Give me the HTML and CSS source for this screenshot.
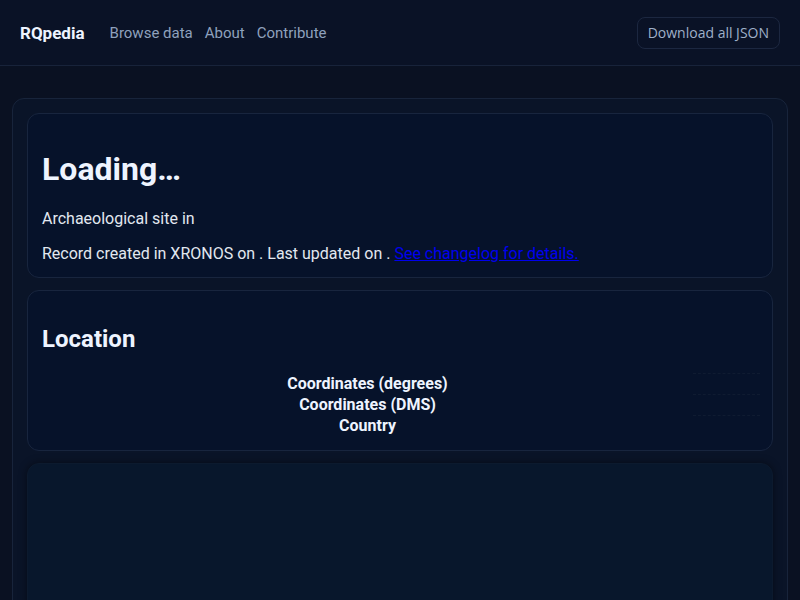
FILE: index.html
```html
<!DOCTYPE html>
<html lang="en">
<head>
<meta charset="utf-8">
<title>RQpedia</title>
<link rel="stylesheet" href="styles.css">
</head>
<body>
<header class="topbar">
  <div class="topbar-left">
    <a class="brand" href="#">RQpedia</a>
    <nav class="nav">
      <a href="#">Browse data</a>
      <a href="#">About</a>
      <a href="#">Contribute</a>
    </nav>
  </div>
  <a class="btn" href="#">Download all JSON</a>
</header>
<main class="main">
  <div class="container">
    <section class="card">
      <h1>Loading…</h1>
      <p>Archaeological site in </p>
      <p>Record created in XRONOS on . Last updated on . <a class="link" href="#">See changelog for details.</a></p>
    </section>
    <section class="card card-loc">
      <h2>Location</h2>
      <table class="info">
        <tr><th>Coordinates (degrees)</th><td></td></tr>
        <tr><th>Coordinates (DMS)</th><td></td></tr>
        <tr><th>Country</th><td></td></tr>
      </table>
    </section>
    <section class="card map"></section>
  </div>
</main>
</body>
</html>
```
FILE: styles.css
```css
html, body {
  margin: 0;
  padding: 0;
}
body {
  background: #0a1122;
  color: #e2e8f0;
  font-family: Roboto, "Liberation Sans", sans-serif;
  font-size: 16px;
}
.topbar {
  height: 65px;
  border-bottom: 1px solid #18233a;
  background: #0a1226;
  display: flex;
  align-items: center;
  justify-content: space-between;
  padding: 0 20px;
}
.topbar-left {
  display: flex;
  align-items: center;
  gap: 25px;
}
.brand {
  color: #eef4ff;
  font-weight: 700;
  font-size: 17px;
  text-decoration: none;
}
.nav {
  display: flex;
  gap: 12px;
}
.nav a {
  color: #8fa1bd;
  font-size: 15px;
  text-decoration: none;
}
.btn {
  box-sizing: border-box;
  font-family: "Open Sans", sans-serif;
  font-size: 14px;
  color: #9fb0c9;
  text-decoration: none;
  border: 1px solid #1c2740;
  border-radius: 8px;
  height: 32px;
  padding: 0 10px;
  display: flex;
  align-items: center;
}
.main {
  padding: 32px 12px;
}
.container {
  background: #0a1428;
  border: 1px solid #18243b;
  border-radius: 12px;
  padding: 14px;
  display: flex;
  flex-direction: column;
  gap: 12px;
}
.card {
  background: #06122a;
  border: 1px solid #18253e;
  border-radius: 12px;
  padding: 15px 14px 14px;
}
.card-loc {
  padding-bottom: 13px;
}
.card > :last-child {
  margin-bottom: 0;
}
h1 {
  font-size: 32px;
  font-weight: 700;
  color: #eef4ff;
  margin: 21px 0;
}
h2 {
  font-size: 24px;
  font-weight: 700;
  color: #eef4ff;
  margin: 19px 0 20px;
}
p {
  margin: 16px 0;
}
.link {
  color: #0000ee;
}
.info {
  width: calc(100% + 2px);
  border-collapse: collapse;
}
.info th {
  font-weight: 700;
  color: #eef4ff;
  height: 21px;
  padding: 0;
  text-align: center;
  vertical-align: top;
}
.info td {
  width: 67px;
  padding: 0;
  border-top: 1px dashed #0f1b31;
  vertical-align: top;
}
.map {
  background: #08172c;
  border-color: #0c1a2e;
  height: 300px;
  box-shadow: 0 0 8px rgba(0, 0, 0, 0.45);
}
```
